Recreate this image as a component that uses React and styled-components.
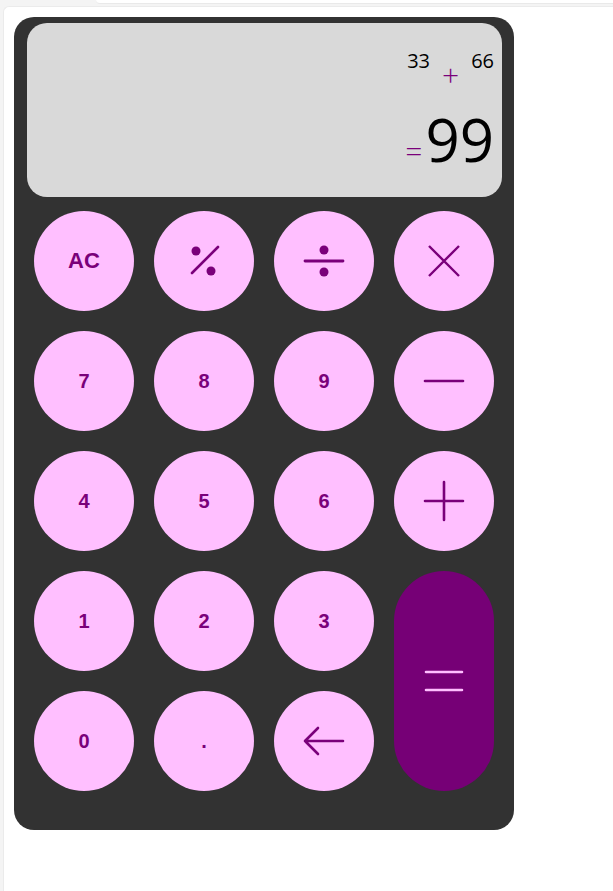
import styled, { createGlobalStyle } from "styled-components";

const GlobalStyle = createGlobalStyle`
	html, body {
		margin: 0;
		padding: 0;
		background: #f4f4f4;
		font-family: "Open Sans", "Liberation Sans", sans-serif;
		overflow: hidden;
	}
`;

const PURPLE = "#7a007a";
const PINK = "#ffbfff";

const Icon = ({ children }) => (
	<svg width='44' height='44' viewBox='-22 -22 44 44' fill='none'>
		{children}
	</svg>
);

const icons = {
	percent: (
		<Icon>
			<circle cx='-8' cy='-10' r='4.5' fill={PURPLE} />
			<circle cx='7' cy='10' r='4.5' fill={PURPLE} />
			<line x1='-12' y1='12' x2='14' y2='-14' stroke={PURPLE} strokeWidth='2.6' strokeLinecap='round' />
		</Icon>
	),
	divide: (
		<Icon>
			<circle cx='0' cy='-11' r='4.5' fill={PURPLE} />
			<circle cx='0' cy='11' r='4.5' fill={PURPLE} />
			<line x1='-19' y1='0' x2='19' y2='0' stroke={PURPLE} strokeWidth='2.8' strokeLinecap='round' />
		</Icon>
	),
	times: (
		<Icon>
			<path d='M-15 -15 L15 15 M15 -15 L-15 15' stroke={PURPLE} strokeWidth='2.4' />
		</Icon>
	),
	minus: (
		<Icon>
			<line x1='-19' y1='0' x2='19' y2='0' stroke={PURPLE} strokeWidth='2.6' strokeLinecap='round' />
		</Icon>
	),
	plus: (
		<Icon>
			<path d='M-19 0 H19 M0 -19 V19' stroke={PURPLE} strokeWidth='2.6' strokeLinecap='round' />
		</Icon>
	),
	back: (
		<Icon>
			<path d='M19 0 H-19 M-6 -13 L-19 0 L-6 13' stroke={PURPLE} strokeWidth='2.6' strokeLinecap='round' strokeLinejoin='round' />
		</Icon>
	),
	equals: (
		<Icon>
			<path d='M-18 -9 H18 M-18 9 H18' stroke={PINK} strokeWidth='2.6' strokeLinecap='round' />
		</Icon>
	),
};

const keys = [
	{ label: "AC", big: true },
	{ icon: "percent" },
	{ icon: "divide" },
	{ icon: "times" },
	{ label: "7" },
	{ label: "8" },
	{ label: "9" },
	{ icon: "minus" },
	{ label: "4" },
	{ label: "5" },
	{ label: "6" },
	{ icon: "plus" },
	{ label: "1" },
	{ label: "2" },
	{ label: "3" },
	{ icon: "equals", equals: true },
	{ label: "0" },
	{ label: "." },
	{ icon: "back" },
];

const App = () => {
	return (
		<>
			<GlobalStyle />
			<TopStrip />
			<Frame>
				<Calculator>
					<Display>
						<Expression>
							<span className='num'>33</span>
							<span className='op'>+</span>
							<span className='num'>66</span>
						</Expression>
						<Result>
							<span className='eq'>=</span>
							<span className='value'>99</span>
						</Result>
					</Display>
					<Keypad>
						{keys.map((k, i) => (
							<Key key={i} $equals={k.equals} $big={k.big}>
								{k.icon ? icons[k.icon] : k.label}
							</Key>
						))}
					</Keypad>
				</Calculator>
			</Frame>
		</>
	);
};

export default App;

const TopStrip = styled.div`
	height: 3px;
	margin-left: 96px;
	background: #ffffff;
	border-bottom: 1px solid #e9e9e9;
	border-bottom-left-radius: 8px;
`;

const Frame = styled.div`
	margin: 2px 0 0 3px;
	min-height: 900px;
	box-sizing: border-box;
	background: #ffffff;
	border: 1px solid #ebebeb;
	border-right: none;
	border-radius: 6px 0 0 0;
	padding: 10px 0 0 10px;
`;

const Calculator = styled.div`
	width: 500px;
	box-sizing: border-box;
	background: #323232;
	border-radius: 20px;
	padding: 6px 20px 39px 20px;
`;

const Display = styled.div`
	height: 174px;
	margin: 0 -8px 14px -7px;
	box-sizing: border-box;
	background: #d9d9d9;
	border-radius: 20px;
	padding: 25px 8px 0 0;
	display: flex;
	flex-direction: column;
	align-items: flex-end;

	.num {
		font-size: 20px;
		color: #000;
		line-height: 26px;
	}
`;

const Expression = styled.div`
	display: flex;
	align-items: flex-start;
	gap: 12px;

	.op {
		color: ${PURPLE};
		font-size: 30px;
		font-weight: 300;
		line-height: 30px;
		margin-top: 12px;
	}
`;

const Result = styled.div`
	display: flex;
	align-items: baseline;
	margin-top: 19px;

	.eq {
		color: ${PURPLE};
		font-size: 30px;
		font-weight: 300;
		margin-right: 3px;
	}

	.value {
		color: #000;
		font-size: 60px;
		line-height: 60px;
	}
`;

const Keypad = styled.div`
	display: grid;
	grid-template-columns: repeat(4, 100px);
	grid-auto-rows: 100px;
	gap: 20px;
`;

const Key = styled.div`
	display: flex;
	align-items: center;
	justify-content: center;
	border-radius: 50px;
	background: ${(p) => (p.$equals ? "#760076" : PINK)};
	color: ${PURPLE};
	font-family: "Liberation Sans", Arial, sans-serif;
	font-weight: bold;
	font-size: ${(p) => (p.$big ? "22px" : "20px")};
	grid-row: ${(p) => (p.$equals ? "span 2" : "auto")};
	grid-column: ${(p) => (p.$equals ? "4" : "auto")};
`;
